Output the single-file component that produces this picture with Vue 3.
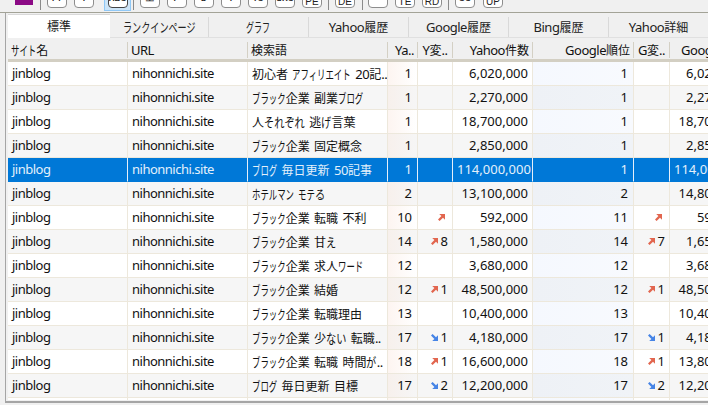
<script setup>
const tools = [
  { kind: 'logo', gap: 7 },
  { kind: 'sep', gap: 6 },
  { label: 'FT', gap: 7 }, { label: 'T', gap: 10 },
  { label: 'ABC', active: true, gap: 2 },
  { kind: 'sep', gap: 6 },
  { label: '工', gap: 7 }, { label: 'T+', gap: 7 }, { label: 'D', gap: 7 }, { label: 'T', gap: 7 },
  { label: 'TC', gap: 7 }, { label: 'SRC', gap: 7 }, { label: 'PE', low: true, gap: 6 },
  { kind: 'sep', gap: 6 },
  { label: 'DE', low: true, gap: 7 },
  { kind: 'sep', gap: 5 },
  { label: '- -', gap: 7 }, { label: 'TE', low: true, gap: 7 }, { label: 'RD', low: true, gap: 6 },
  { kind: 'sep', gap: 6 },
  { label: 'GO', gap: 8 }, { label: 'UP', low: true, gap: 8 }
]

// Split a string into runs, so that kana can be condensed as in the original UI font.
function runs(text, kanaWidth = 8.4) {
  const found = String(text).match(/[\u3040-\u309F]+|[\u30A0-\u30FF]+|[\u4E00-\u9FFF]+|[^\u3040-\u30FF\u4E00-\u9FFF]+/g) || []
  return found.map((t) => {
    if (/^[\u3040-\u30FF]/.test(t)) {
      const w = /^[\u3040-\u309F]/.test(t) ? 10.2 : kanaWidth
      return {
        t,
        cls: 'kana',
        style: {
          transform: `scaleX(${w / 13})`,
          marginRight: `${-t.length * (13 - w)}px`
        }
      }
    }
    if (/^[\u4E00-\u9FFF]/.test(t)) return { t, cls: 'kanji', style: null }
    return { t, cls: 'latin', style: null }
  })
}

const tabs = [
  { t: '標準', k: 8.4 }, { t: 'ランクインページ', k: 9.1 }, { t: 'グラフ', k: 8 },
  { t: 'Yahoo履歴', k: 8.4 }, { t: 'Google履歴', k: 8.4 }, { t: 'Bing履歴', k: 8.4 }, { t: 'Yahoo詳細', k: 8.4 }
]
const heads = [
  { t: 'サイト名' }, { t: 'URL' }, { t: '検索語' }, { t: 'Ya..', r: true }, { t: 'Y変..', c: true },
  { t: 'Yahoo件数', r: true }, { t: 'Google順位', r: true }, { t: 'G変..', c: true }, { t: 'Google件数', r: true }
]
const rows = [
  ['初心者 アフィリエイト 20記..', 1, null, '6,020,000', 1, null, '6,020,000'],
  ['ブラック企業 副業ブログ', 1, null, '2,270,000', 1, null, '2,270,000'],
  ['人それぞれ 逃げ言葉', 1, null, '18,700,000', 1, null, '18,700,000'],
  ['ブラック企業 固定概念', 1, null, '2,850,000', 1, null, '2,850,000'],
  ['ブログ 毎日更新 50記事', 1, null, '114,000,000', 1, null, '114,000,000'],
  ['ホテルマン モテる', 2, null, '13,100,000', 2, null, '14,800,000'],
  ['ブラック企業 転職 不利', 10, ['up', ''], '592,000', 11, ['up', ''], '592,000'],
  ['ブラック企業 甘え', 14, ['up', 8], '1,580,000', 14, ['up', 7], '1,650,000'],
  ['ブラック企業 求人ワード', 12, null, '3,680,000', 12, null, '3,680,000'],
  ['ブラック企業 結婚', 12, ['up', 1], '48,500,000', 12, ['up', 1], '48,500,000'],
  ['ブラック企業 転職理由', 13, null, '10,400,000', 13, null, '10,400,000'],
  ['ブラック企業 少ない 転職..', 17, ['down', 1], '4,180,000', 17, ['down', 1], '4,180,000'],
  ['ブラック企業 転職 時間が..', 18, ['up', 1], '16,600,000', 18, ['up', 1], '13,800,000'],
  ['ブログ 毎日更新 目標', 17, ['down', 2], '12,200,000', 17, ['down', 2], '12,200,000'],
  ['', '', null, '', '', null, '']
]
</script>

<template>
  <div class="app">
    <div class="toolbar">
      <template v-for="(b, i) in tools" :key="i">
        <span v-if="b.kind === 'sep'" class="sep" :style="{ marginRight: b.gap + 'px' }"></span>
        <span v-else-if="b.kind === 'logo'" class="logo" :style="{ marginRight: b.gap + 'px' }"></span>
        <span v-else class="toolwrap" :class="{ active: b.active }" :style="{ marginRight: b.gap + 'px' }">
          <span class="tool" :class="{ low: b.low }">{{ b.label }}</span>
        </span>
      </template>
    </div>
    <div class="panel">
      <div class="tabs">
        <div v-for="(tab, i) in tabs" :key="tab.t" class="tab" :class="{ on: i === 0 }">
          <span v-for="(p, j) in runs(tab.t, tab.k)" :key="j" :class="p.cls" :style="p.style">{{ p.t }}</span>
        </div>
      </div>
      <div class="grid">
        <div class="row head">
          <div v-for="h in heads" :key="h.t" class="hcell" :class="{ r: h.r, c: h.c }">
            <span v-for="(p, j) in runs(h.t)" :key="j" :class="p.cls" :style="p.style">{{ p.t }}</span>
          </div>
        </div>
        <div v-for="(row, i) in rows" :key="i" class="row body" :class="{ alt: i % 2 === 1, sel: i === 4 }">
          <div class="cell latin">{{ row[0] ? 'jinblog' : '' }}</div>
          <div class="cell latin">{{ row[0] ? 'nihonnichi.site' : '' }}</div>
          <div class="cell">
            <span v-for="(p, j) in runs(row[0])" :key="j" :class="p.cls" :style="p.style">{{ p.t }}</span>
          </div>
          <div class="cell r rank">{{ row[1] }}</div>
          <div class="cell r delta">
            <template v-if="row[2]">
              <svg class="arrow" :class="row[2][0]" viewBox="0 0 7 7" width="7" height="7">
                <path v-if="row[2][0] === 'up'" d="M1.2 0 H7 V5.8 L5 3.8 L1.6 7 L0 5.4 L3.4 2 Z" />
                <path v-else d="M1.2 7 H7 V1.2 L5 3.2 L1.6 0 L0 1.6 L3.4 5 Z" />
              </svg>
              <span v-if="row[2][1] !== ''">{{ row[2][1] }}</span>
            </template>
          </div>
          <div class="cell r">{{ row[3] }}</div>
          <div class="cell r gcol">{{ row[4] }}</div>
          <div class="cell r delta">
            <template v-if="row[5]">
              <svg class="arrow" :class="row[5][0]" viewBox="0 0 7 7" width="7" height="7">
                <path v-if="row[5][0] === 'up'" d="M1.2 0 H7 V5.8 L5 3.8 L1.6 7 L0 5.4 L3.4 2 Z" />
                <path v-else d="M1.2 7 H7 V1.2 L5 3.2 L1.6 0 L0 1.6 L3.4 5 Z" />
              </svg>
              <span v-if="row[5][1] !== ''">{{ row[5][1] }}</span>
            </template>
          </div>
          <div class="cell r">{{ row[6] }}</div>
        </div>
      </div>
    </div>
  </div>
</template>

<style>
html, body { margin: 0; background: #f0f0f0; overflow: hidden; }
</style>

<style scoped>
.app {
  width: 708px;
  height: 405px;
  overflow: hidden;
  background: #f0f0f0;
  font-family: "Noto Sans", "Noto Sans CJK JP", sans-serif;
  font-size: 13px;
  color: #111;
}
.kana {
  display: inline-block;
  transform-origin: left center;
  font-family: "Noto Sans CJK JP", sans-serif;
}
.kanji {
  font-size: 12px;
  font-family: "Noto Sans CJK JP", sans-serif;
}
.latin { letter-spacing: -0.5px; word-spacing: 1.5px; }

.toolbar {
  height: 12px;
  display: flex;
  align-items: flex-start;
  padding-left: 15px;
  overflow: hidden;
  border-bottom: 1px solid #a3a397;
}
.logo {
  flex: none;
  width: 18px;
  height: 5px;
  background: #8b0a85;
}
.sep {
  flex: none;
  width: 1px;
  height: 10px;
  background: #8a8a8a;
}
.toolwrap {
  flex: none;
  display: flex;
  align-items: flex-end;
  height: 8px;
}
.toolwrap.active {
  box-sizing: border-box;
  width: 27px;
  height: 11px;
  justify-content: center;
  background: #cce4f7;
  border: 1px solid #90c8f6;
  border-top: 0;
  padding-bottom: 2px;
}
.tool {
  box-sizing: border-box;
  width: 20px;
  height: 20px;
  flex: none;
  background: #fff;
  border: 1px solid #8d8d8d;
  border-radius: 4px;
  font: bold 8px/20px "Liberation Sans", sans-serif;
  text-align: center;
  color: #222;
  overflow: hidden;
  white-space: nowrap;
}
.toolwrap.active .tool { border-color: #444; }
.tool.low { line-height: 26px; font-weight: normal; font-size: 10px; }

.panel {
  box-sizing: border-box;
  margin-left: 5px;
  width: 703px;
  height: 390px;
  padding: 1px 0 1px 2px;
  border-left: 1px solid #a5a5a5;
  border-bottom: 2px solid #a5a5a5;
  overflow: hidden;
}
.tabs {
  display: flex;
  height: 23px;
  border-bottom: 1px solid #e0e0e0;
}
.tab {
  box-sizing: border-box;
  flex: none;
  width: 100px;
  height: 20px;
  margin-top: 3px;
  line-height: 20px;
  text-align: center;
  border-right: 1px solid #d9d9d9;
  color: #222;
  white-space: nowrap;
}
.tab.on + .tab { width: 99px; }
.tab.on {
  background: #fff;
  width: 102px;
  border: 0;
  border-top: 1px solid #d9d9d9;
  margin-top: 0;
  height: 24px;
  line-height: 21px;
  position: relative;
}
.grid { height: 362px; overflow: hidden; background: #fff; }
.row {
  display: grid;
  grid-template-columns: 120px 120px 140px 30px 35px 80px 101px 36px 80px;
}
.head {
  height: 21px;
  background: #f0f0f0;
  border-bottom: 3px solid #d3cfc3;
}
.hcell {
  box-sizing: border-box;
  padding: 0 3px;
  height: 16px;
  margin-top: 4px;
  line-height: 16px;
  white-space: nowrap;
  overflow: hidden;
  border-right: 1px solid #d4d0c4;
}
.r { text-align: right; }
.c { text-align: center; }
.body {
  height: 24px;
  background: #fff;
}
.body.alt { background: #f6f6f6; }
.cell {
  box-sizing: border-box;
  height: 24px;
  padding: 0 4px;
  line-height: 23px;
  white-space: nowrap;
  overflow: hidden;
  border-right: 1px solid #ede8dc;
  border-bottom: 1px solid #ede8dc;
}
.rank { background: linear-gradient(90deg, #fdf5f1, #fff); padding-right: 5px; }
.alt .rank { background: linear-gradient(90deg, #f7f0ec, #f6f6f6); }
.gcol { background: linear-gradient(90deg, #f5f8fe, #f8fafe); padding-right: 5px; }
.alt .gcol { background: linear-gradient(90deg, #eef1f6, #f0f3f7); }
.sel .cell {
  background: #0078d7;
  color: #e3f0fb;
  border-right-color: #e6effa;
  border-bottom-color: #0078d7;
}
.delta { display: flex; align-items: center; justify-content: flex-end; gap: 3px; }
.arrow { flex: none; }
.arrow:only-child { margin-right: 3px; }
.arrow.up { fill: #e2664f; }
.arrow.down { fill: #4684e6; }
</style>
